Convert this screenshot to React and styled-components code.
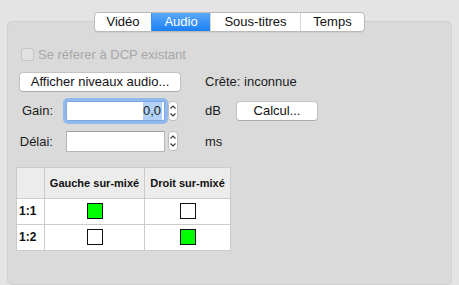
import styled, { createGlobalStyle } from "styled-components";

const GlobalStyle = createGlobalStyle`
  html, body {
    margin: 0;
    padding: 0;
    background: #e4e4e4;
    overflow: hidden;
  }
  body {
    font-family: "Liberation Sans", Arial, sans-serif;
    font-size: 13px;
    color: #1c1c1c;
  }
`;

const Window = styled.div`
  width: 459px;
  height: 285px;
  padding-top: 12px;
  box-sizing: border-box;
  display: flex;
  flex-direction: column;
  align-items: center;
`;

const TabBar = styled.div`
  position: relative;
  z-index: 1;
  display: flex;
  height: 19px;
  border: 1px solid #b9b9b9;
  border-radius: 4px;
  background: #fff;
  overflow: hidden;
  box-shadow: 0 1px 0 rgba(0, 0, 0, 0.05);
`;

const Tab = styled.div`
  width: ${(p) => p.$w}px;
  box-sizing: border-box;
  display: flex;
  align-items: center;
  justify-content: center;
  font-size: 13px;
  border-left: ${(p) => (p.$first ? "none" : "1px solid #d6d6d6")};
  color: ${(p) => (p.$active ? "#fff" : "#111")};
  background: ${(p) =>
    p.$active ? "linear-gradient(#5aa9f8, #1b7ff5)" : "transparent"};
  ${(p) => p.$active && "border-left-color: #3f93f6;"}
`;

const Panel = styled.div`
  width: 445px;
  height: 280px;
  margin-top: -11px;
  box-sizing: border-box;
  border: 1px solid #d0d0d0;
  border-radius: 5px;
  background: #dadada;
  padding: 26px 8px 0;
  display: flex;
  flex-direction: column;
`;

const Row = styled.div`
  display: flex;
  align-items: center;
  padding-left: 3px;
  margin-top: ${(p) => p.$mt || 0}px;
  height: ${(p) => p.$h || 20}px;
`;

const CheckBox = styled.span`
  width: 13px;
  height: 13px;
  box-sizing: border-box;
  margin-left: 2px;
  margin-right: 4px;
  border: 1px solid #c4c4c4;
  border-radius: 3px;
  background: #e2e2e2;
`;

const Disabled = styled.span`
  color: #a7a7a7;
`;

const Button = styled.div`
  width: ${(p) => p.$w}px;
  height: 20px;
  box-sizing: border-box;
  border: 1px solid #c3c3c3;
  border-bottom-color: #acacac;
  border-radius: 4px;
  background: #fff;
  display: flex;
  align-items: center;
  justify-content: center;
  font-size: 13px;
  color: #111;
`;

const Info = styled.span`
  margin-left: ${(p) => p.$ml}px;
`;

const Label = styled.span`
  width: 34px;
  text-align: right;
  margin-right: 13px;
`;

const Field = styled.div`
  width: 99px;
  height: ${(p) => (p.$focus ? 20 : 21)}px;
  box-sizing: border-box;
  background: #fff;
  border: 1px solid ${(p) => (p.$focus ? "#7ea8e4" : "#b6b6b6")};
  border-top-color: ${(p) => (p.$focus ? "#7ea8e4" : "#a3a3a3")};
  box-shadow: ${(p) => (p.$focus ? "0 0 0 3px #92b9ec" : "none")};
  border-radius: ${(p) => (p.$focus ? "2px" : "0")};
  display: flex;
  align-items: center;
  justify-content: flex-end;
  padding-right: 2px;
`;

const Selected = styled.span`
  background: #b2d2fa;
  padding: 1px 1px 1px 0;
  line-height: 16px;
`;

const StepperBox = styled.div`
  width: 10px;
  height: 20px;
  margin-left: 3px;
  box-sizing: border-box;
  border: 1px solid #bdbdbd;
  border-radius: 4px;
  background: #fff;
  display: flex;
`;

const Unit = styled.span`
  width: 31px;
  margin-left: 27px;
`;

const Table = styled.table`
  margin-top: 15px;
  border-collapse: collapse;
  background: #fff;
  font-size: 11px;
  table-layout: fixed;
  width: 214px;
`;

const HeadCell = styled.th`
  height: 30px;
  padding: 0;
  background: #ececec;
  border: 1px solid #cbcbcb;
  font-weight: bold;
  font-size: 11px;
  color: #111;
  width: ${(p) => p.$w}px;
`;

const Cell = styled.td`
  height: 25px;
  padding: 0 0 0 ${(p) => (p.$label ? 2 : 0)}px;
  border: 1px solid #cbcbcb;
  text-align: ${(p) => (p.$label ? "left" : "center")};
  font-weight: ${(p) => (p.$label ? "bold" : "normal")};
  font-size: ${(p) => (p.$label ? 12 : 11)}px;
  vertical-align: middle;
  color: #111;
`;

const Mark = styled.span`
  display: inline-block;
  vertical-align: middle;
  width: 16px;
  height: 16px;
  box-sizing: border-box;
  border: 1px solid #111;
  background: ${(p) => (p.$on ? "#00ff00" : "#fff")};
`;

function Stepper() {
  return (
    <StepperBox>
      <svg width="8" height="18" viewBox="0 0 8 18">
        <path d="M1.5 6.5 L4 4 L6.5 6.5" fill="none" stroke="#333" strokeWidth="1.1" />
        <path d="M1.5 11.5 L4 14 L6.5 11.5" fill="none" stroke="#333" strokeWidth="1.1" />
      </svg>
    </StepperBox>
  );
}

const matrix = [
  { name: "1:1", left: true, right: false },
  { name: "1:2", left: false, right: true },
];

export default function App() {
  return (
    <Window>
      <GlobalStyle />
      <TabBar>
        <Tab $w={56} $first>Vidéo</Tab>
        <Tab $w={59} $active>Audio</Tab>
        <Tab $w={90}>Sous-titres</Tab>
        <Tab $w={64}>Temps</Tab>
      </TabBar>
      <Panel>
        <Row $h={13}>
          <CheckBox />
          <Disabled>Se réferer à DCP existant</Disabled>
        </Row>
        <Row $mt={11}>
          <Button $w={162}>Afficher niveaux audio...</Button>
          <Info $ml={24}>Crête: inconnue</Info>
        </Row>
        <Row $mt={9}>
          <Label>Gain:</Label>
          <Field $focus>
            <Selected>0,0</Selected>
          </Field>
          <Stepper />
          <Unit>dB</Unit>
          <Button $w={82}>Calcul...</Button>
        </Row>
        <Row $mt={10} $h={21}>
          <Label>Délai:</Label>
          <Field />
          <Stepper />
          <Unit>ms</Unit>
        </Row>
        <Table>
          <thead>
            <tr>
              <HeadCell $w={27} />
              <HeadCell $w={99}>Gauche sur-mixé</HeadCell>
              <HeadCell $w={85}>Droit sur-mixé</HeadCell>
            </tr>
          </thead>
          <tbody>
            {matrix.map((r) => (
              <tr key={r.name}>
                <Cell $label>{r.name}</Cell>
                <Cell><Mark $on={r.left} /></Cell>
                <Cell><Mark $on={r.right} /></Cell>
              </tr>
            ))}
          </tbody>
        </Table>
      </Panel>
    </Window>
  );
}
